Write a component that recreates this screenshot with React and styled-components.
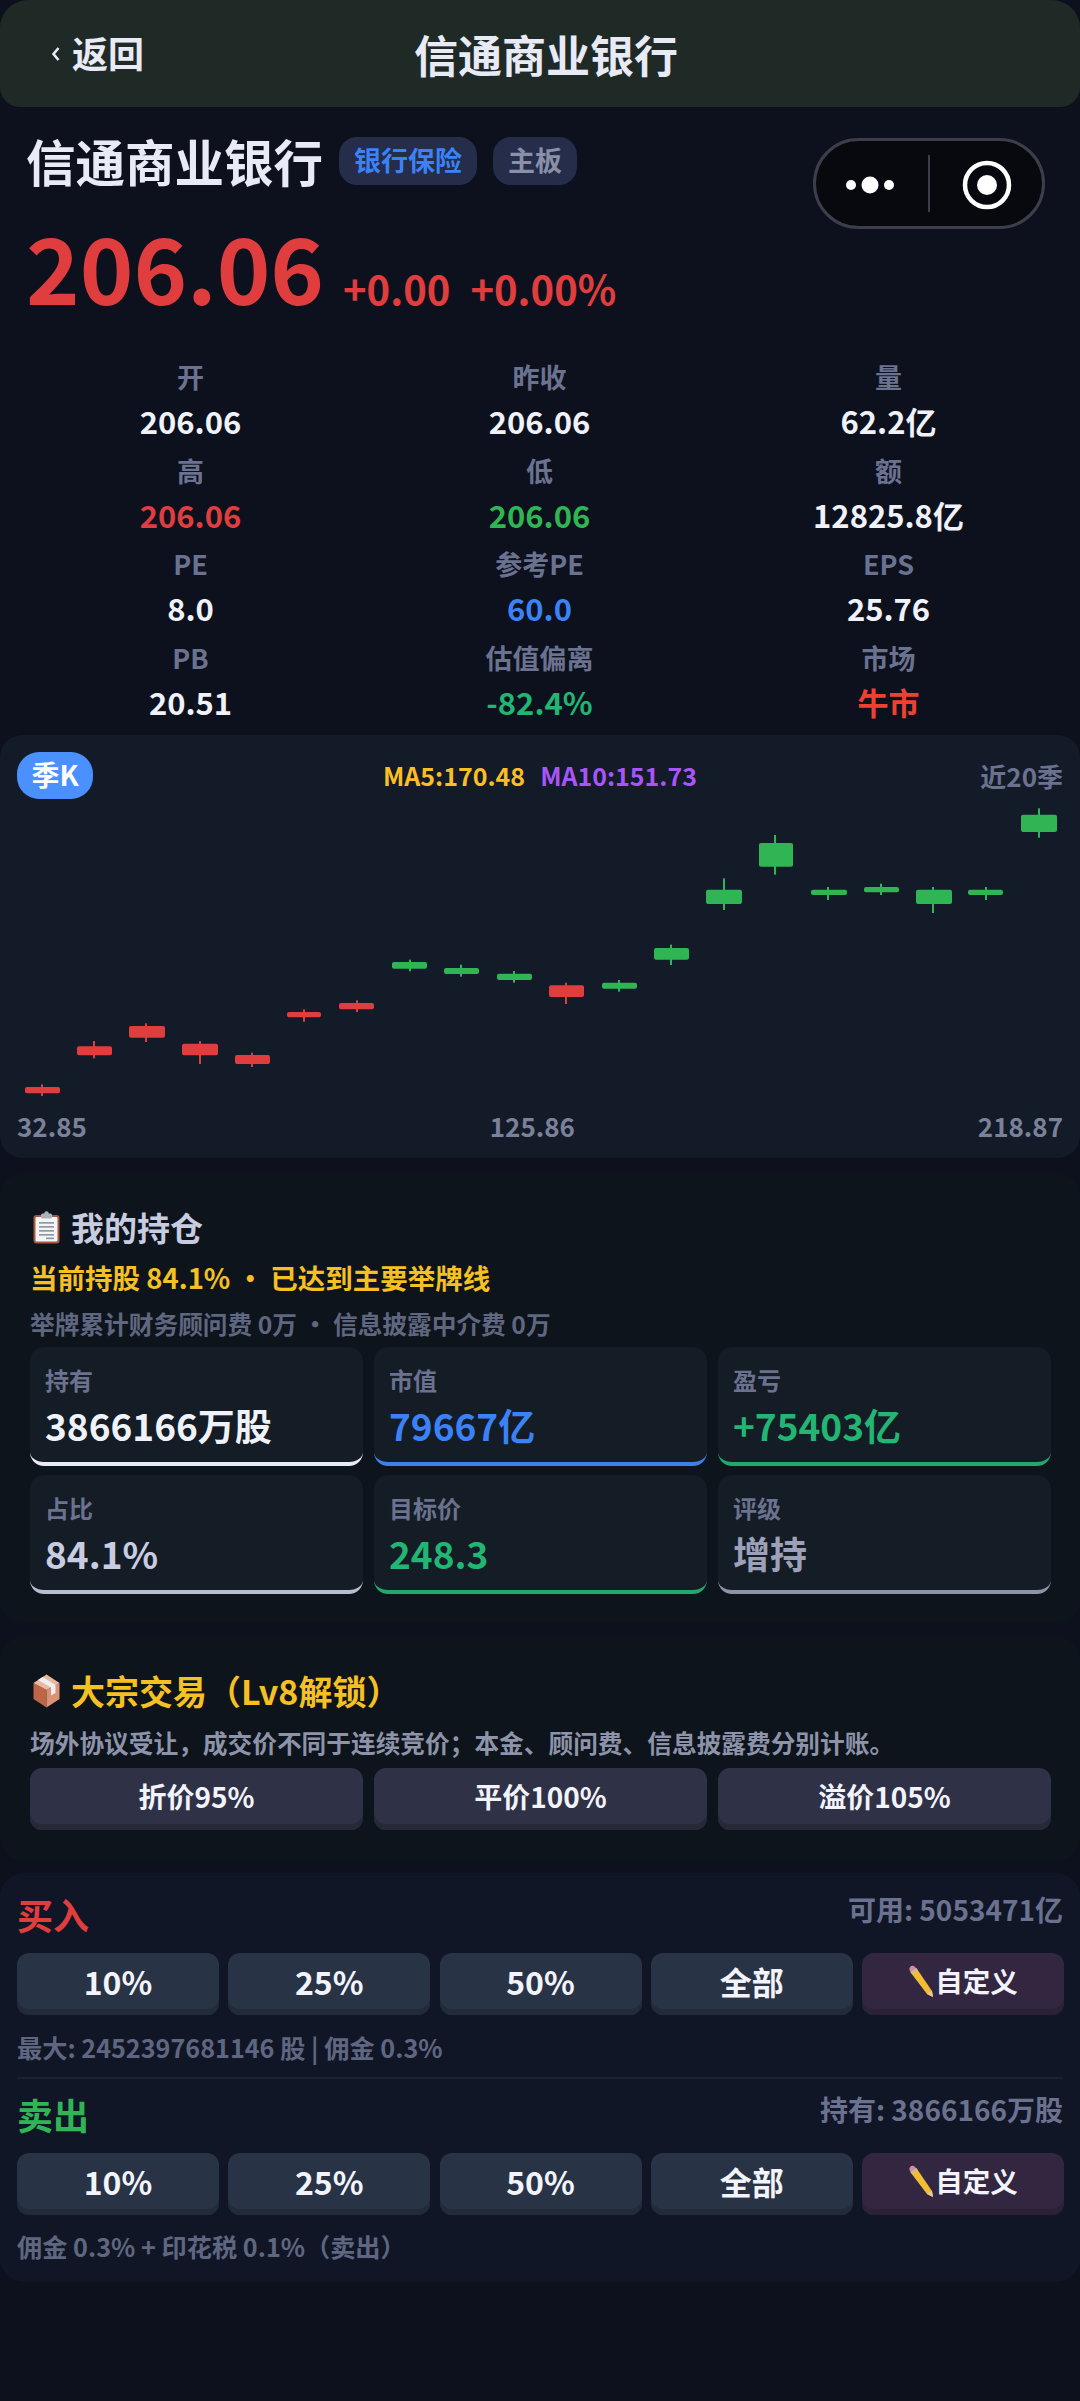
import React from 'react';
import styled, { createGlobalStyle } from 'styled-components';

const Global = createGlobalStyle`
  html, body { margin: 0; padding: 0; background: #0c111d; }
  body { font-family: "Noto Sans CJK SC", "Noto Sans", sans-serif; font-weight: 700; }
  * { box-sizing: border-box; }
`;

const Page = styled.div`
  width: 1080px;
  height: 2401px;
  overflow: hidden;
  background: #0c111d;
  display: flex;
  flex-direction: column;
`;

const NavBar = styled.header`
  height: 107px;
  background: #1f2a26;
  border-radius: 28px 28px 20px 20px;
  display: grid;
  grid-template-columns: 1fr auto 1fr;
  align-items: center;
  padding: 0 40px 0 52px;
`;
const BackLink = styled.div`
  display: flex;
  align-items: center;
  gap: 12px;
  color: #e8eaf6;
  font-size: 36px;
  line-height: 1;
  margin-top: -4px;
`;
const NavTitle = styled.div`
  color: #e8eaf6;
  font-size: 44px;
  line-height: 1;
`;

const Quote = styled.section`
  position: relative;
  padding: 26px 26px 0;
  height: 628px;
`;
const NameRow = styled.div`
  display: flex;
  align-items: center;
  gap: 16px;
  height: 56px;
`;
const StockName = styled.div`
  color: #e8eaf6;
  font-size: 49.5px;
  line-height: 1;
`;
const Tag = styled.span`
  height: 48px;
  padding: 0 15px;
  border-radius: 18px;
  background: #252d4a;
  color: ${p => p.$color};
  font-size: 27px;
  line-height: 46px;
`;
const Capsule = styled.div`
  position: absolute;
  left: 813px;
  top: 31px;
  width: 232px;
  height: 91px;
  border-radius: 46px;
  border: 3px solid #3c3f4b;
  background: #08090f;
`;
const PriceRow = styled.div`
  display: flex;
  align-items: baseline;
  margin-top: 17px;
  color: #e03e3e;
`;
const Price = styled.div`
  font-size: 91px;
  line-height: 118px;
  width: 317px;
`;
const Delta = styled.div`
  font-size: 40px;
  margin-right: 20px;
  line-height: 1;
  font-weight: 700;
`;
const QuoteGrid = styled.div`
  display: grid;
  grid-template-columns: repeat(3, 349px);
  margin: 31px 0 0 -10px;
  grid-auto-rows: 93.5px;
`;
const QuoteCell = styled.div`
  text-align: center;
`;
const QuoteLabel = styled.div`
  color: #6b7290;
  font-size: 27px;
  line-height: 44px;
`;
const QuoteValue = styled.div`
  color: ${p => p.$color || '#f0f2fa'};
  font-size: 31px;
  line-height: 44px;
`;

const ChartCard = styled.section`
  height: 423px;
  background: #131a28;
  border-radius: 22px;
  padding: 17px 17px 0;
`;
const ChartHead = styled.div`
  display: grid;
  grid-template-columns: 1fr auto 1fr;
  align-items: center;
  height: 47px;
`;
const PeriodPill = styled.div`
  width: 76px;
  height: 47px;
  border-radius: 22px;
  background: #4a90ff;
  color: #fff;
  font-size: 28px;
  line-height: 45px;
  text-align: center;
`;
const MALine = styled.div`
  display: flex;
  gap: 15px;
  font-size: 25px;
  line-height: 47px;
`;
const MA = styled.span`
  color: ${p => p.$color};
`;
const ChartNote = styled.div`
  color: #6b7290;
  font-size: 26px;
  text-align: right;
`;
const ChartSvg = styled.svg`
  display: block;
  width: 1080px;
  height: 304px;
  margin-left: -17px;
`;
const AxisRow = styled.div`
  display: flex;
  justify-content: space-between;
  color: #7b8199;
  font-size: 26px;
  line-height: 40px;
  margin-top: 3px;
`;

const Panel = styled.section`
  margin-top: ${p => p.$mt}px;
  height: ${p => p.$h}px;
  background: ${p => p.$bg};
  border-radius: 24px;
  padding: ${p => p.$pad};
`;
const SectionTitle = styled.div`
  display: flex;
  align-items: center;
  gap: 11px;
  color: ${p => p.$color};
  font-size: ${p => p.$size}px;
  line-height: 44px;
  height: 44px;
  padding-left: 3px;
`;
const Notice = styled.div`
  color: #f5c023;
  font-size: 27.5px;
  line-height: 40px;
  margin-top: 8px;
`;
const Fine = styled.div`
  color: ${p => p.$color};
  font-size: ${p => p.$size}px;
  line-height: 36px;
  margin-top: ${p => p.$mt}px;
`;
const ThreeGrid = styled.div`
  display: grid;
  grid-template-columns: repeat(3, 333px);
  column-gap: 11px;
  row-gap: 9px;
  margin-top: ${p => p.$mt}px;
`;
const StatCard = styled.div`
  height: 119px;
  padding: 15px 15px 0;
  border-radius: 14px;
  background: #141c25;
  border-bottom: 4px solid ${p => p.$accent};
`;
const StatLabel = styled.div`
  color: #6b7290;
  font-size: 24px;
  line-height: 36px;
`;
const StatValue = styled.div`
  color: ${p => p.$color};
  font-size: 37px;
  line-height: 48px;
  margin-top: 3px;
`;
const Btn = styled.div`
  height: 62px;
  border-radius: 12px;
  background: ${p => p.$bg};
  box-shadow: inset 0 -6px 0 ${p => p.$edge};
  color: #f3f4fb;
  font-size: ${p => p.$size}px;
  display: flex;
  align-items: center;
  justify-content: center;
  padding-bottom: 6px;
  line-height: 1;
`;
const SideHead = styled.div`
  display: flex;
  justify-content: space-between;
  align-items: flex-start;
  height: 56px;
`;
const SideTitle = styled.div`
  color: ${p => p.$color};
  font-size: 36px;
  line-height: 56px;
`;
const SideInfo = styled.div`
  color: #6b7290;
  font-size: 28px;
  line-height: 46px;
`;
const FiveGrid = styled.div`
  display: grid;
  grid-template-columns: repeat(5, 202px);
  column-gap: 9.25px;
  margin-top: 11px;
`;
const Divider = styled.div`
  height: 2px;
  background: #1c2235;
  margin: 12px 0 7px;
`;

const Dots = () => (
  <svg width="232" height="91" viewBox="0 0 232 91" style={{ display: 'block', margin: '-3px' }}>
    <circle cx="38" cy="47" r="5" fill="#fff" />
    <circle cx="57" cy="47" r="8.5" fill="#fff" />
    <circle cx="76" cy="47" r="5" fill="#fff" />
    <rect x="115" y="17" width="2" height="57" fill="#3c3f4b" />
    <circle cx="174" cy="47" r="22" fill="none" stroke="#fff" strokeWidth="4.5" />
    <circle cx="174" cy="47" r="10" fill="#fff" />
  </svg>
);

const Chevron = () => (
  <svg width="8" height="16" viewBox="0 0 8 16" style={{ marginTop: 4 }}>
    <path d="M6.5 2 L1.5 8 L6.5 14" fill="none" stroke="#e8eaf6" strokeWidth="2.6" />
  </svg>
);

const Clipboard = () => (
  <svg width="27" height="33" viewBox="0 0 27 33">
    <rect x="0.5" y="4" width="26" height="28.5" rx="3" fill="#a8583f" />
    <rect x="2.5" y="6" width="22" height="24.5" rx="1" fill="#f4f5f6" />
    <rect x="8" y="2.5" width="11" height="5" rx="1.5" fill="#aab3bb" />
    <circle cx="13.5" cy="2.5" r="2.2" fill="#aab3bb" />
    <g fill="#8f99a3">
      <rect x="6" y="11" width="15" height="1.7" />
      <rect x="6" y="15" width="15" height="1.7" />
      <rect x="6" y="19" width="15" height="1.7" />
      <rect x="6" y="23" width="15" height="1.7" />
      <rect x="13" y="26.5" width="8" height="1.7" />
    </g>
  </svg>
);

const Parcel = () => (
  <svg width="27" height="34" viewBox="0 0 27 34">
    <path d="M0.5 9 L13.5 16 L13.5 33.5 L0.5 25 Z" fill="#bd6547" />
    <path d="M13.5 16 L26.5 9 L26.5 25 L13.5 33.5 Z" fill="#dc9274" />
    <path d="M0.5 9 L13.5 0.5 L26.5 9 L13.5 16 Z" fill="#ecb9a0" />
    <path d="M5 6 L9.5 3 L22.5 11 L22.5 19 L18 21.5 L18 13.5 Z" fill="#eeeeee" />
  </svg>
);

const Pencil = () => (
  <svg width="26" height="33" viewBox="0 0 26 33" style={{ marginRight: 1 }}>
    <path d="M3 8 L9 4 L24 26 L25 32 L19 29 Z" fill="#f2bd35" />
    <path d="M1.5 5 C1 3 2 1.5 3.5 1 C5 0.5 6 1 7 2 L9 4 L3 8 Z" fill="#d98a94" />
    <path d="M2.5 7 L8.5 3 L9.5 4.5 L3.5 8.5 Z" fill="#b6bcc2" />
    <path d="M19 29 L24 26 L25 32 Z" fill="#e8c9a0" />
  </svg>
);

const RED = '#e03e3e';
const GREEN = '#2fb553';

// [color, centreX, bodyLeft, bodyRight, bodyTop, bodyBottom, wickTop, wickBottom]
// x in page pixels; y in thirds of a pixel as measured, offset by the drawing's top
const candles = [
  [RED, 42, 25, 60, 1071, 1090, 1063, 1098],
  [RED, 94, 77, 112, 949, 976, 933, 985],
  [RED, 146, 129, 165, 888, 923, 880, 936],
  [RED, 200, 182, 218, 941, 976, 933, 1002],
  [RED, 252, 235, 270, 975, 1002, 968, 1011],
  [RED, 304, 287, 321, 846, 862, 838, 875],
  [RED, 357, 339, 374, 819, 838, 811, 846],
  [GREEN, 410, 392, 427, 696, 716, 689, 724],
  [GREEN, 461, 444, 479, 714, 732, 704, 740],
  [GREEN, 514, 497, 532, 731, 750, 723, 758],
  [RED, 566, 549, 584, 766, 801, 758, 822],
  [GREEN, 619, 602, 637, 758, 776, 750, 785],
  [GREEN, 671, 654, 689, 654, 689, 644, 705],
  [GREEN, 724, 706, 742, 479, 522, 445, 540],
  [GREEN, 775, 759, 793, 339, 410, 315, 434],
  [GREEN, 828, 811, 847, 479, 495, 471, 510],
  [GREEN, 881, 864, 899, 471, 487, 461, 495],
  [GREEN, 933, 916, 952, 479, 522, 471, 549],
  [GREEN, 986, 968, 1003, 479, 495, 471, 510],
  [GREEN, 1039, 1021, 1057, 254, 306, 235, 323],
];

const Candles = () => (
  <ChartSvg viewBox="0 0 1080 304">
    {candles.map(([c, cx, l, r, bt, bb, wt, wb], i) => {
      const y = v => v / 3 - 69;
      return (
        <g key={i} fill={c}>
          <rect x={cx - 1} y={y(wt)} width="2" height={(wb - wt) / 3} />
          <rect x={l} y={y(bt)} width={r - l} height={(bb - bt) / 3} rx="2" />
        </g>
      );
    })}
  </ChartSvg>
);

const quote = [
  ['开', '206.06'], ['昨收', '206.06'], ['量', '62.2亿'],
  ['高', '206.06', RED], ['低', '206.06', GREEN], ['额', '12825.8亿'],
  ['PE', '8.0'], ['参考PE', '60.0', '#3b82f6'], ['EPS', '25.76'],
  ['PB', '20.51'], ['估值偏离', '-82.4%', '#22b573'], ['市场', '牛市', '#f04030'],
];
const stats = [
  ['持有', '3866166万股', '#f0f2fa', '#e8eaf5'],
  ['市值', '79667亿', '#3b82f6', '#3f7fe8'],
  ['盈亏', '+75403亿', '#22b573', '#22a86c'],
  ['占比', '84.1%', '#c8cce0', '#b9bdd0'],
  ['目标价', '248.3', '#22b573', '#22a86c'],
  ['评级', '增持', '#9ca0b8', '#8f93a8'],
];
const amounts = ['10%', '25%', '50%', '全部'];

const TradeButtons = () => (
  <FiveGrid>
    {amounts.map(a => (
      <Btn key={a} $bg="#283346" $edge="#212b3a" $size={32}>{a}</Btn>
    ))}
    <Btn $bg="#322640" $edge="#2b2238" $size={27.5}><Pencil />自定义</Btn>
  </FiveGrid>
);

export default function App() {
  return (
    <Page>
      <Global />
      <NavBar>
        <BackLink><Chevron />返回</BackLink>
        <NavTitle>信通商业银行</NavTitle>
      </NavBar>
      <Quote>
        <NameRow>
          <StockName>信通商业银行</StockName>
          <Tag $color="#3b82f6">银行保险</Tag>
          <Tag $color="#8a90a8">主板</Tag>
        </NameRow>
        <Capsule><Dots /></Capsule>
        <PriceRow>
          <Price>206.06</Price>
          <Delta>+0.00</Delta>
          <Delta>+0.00%</Delta>
        </PriceRow>
        <QuoteGrid>
          {quote.map(([l, v, c]) => (
            <QuoteCell key={l}>
              <QuoteLabel>{l}</QuoteLabel>
              <QuoteValue $color={c}>{v}</QuoteValue>
            </QuoteCell>
          ))}
        </QuoteGrid>
      </Quote>
      <ChartCard>
        <ChartHead>
          <PeriodPill>季K</PeriodPill>
          <MALine>
            <MA $color="#fbbf24">MA5:170.48</MA>
            <MA $color="#a855f7">MA10:151.73</MA>
          </MALine>
          <ChartNote>近20季</ChartNote>
        </ChartHead>
        <Candles />
        <AxisRow>
          <span>32.85</span><span>125.86</span><span>218.87</span>
        </AxisRow>
      </ChartCard>
      <Panel $mt={15} $h={450} $bg="#0e141c" $pad="32px 30px 0">
        <SectionTitle $color="#c8cce0" $size={33}><Clipboard />我的持仓</SectionTitle>
        <Notice>当前持股 84.1% · 已达到主要举牌线</Notice>
        <Fine $color="#5f6780" $size={24.7} $mt={8}>举牌累计财务顾问费 0万 · 信息披露中介费 0万</Fine>
        <ThreeGrid $mt={6}>
          {stats.map(([l, v, c, a]) => (
            <StatCard key={l} $accent={a}>
              <StatLabel>{l}</StatLabel>
              <StatValue $color={c}>{v}</StatValue>
            </StatCard>
          ))}
        </ThreeGrid>
      </Panel>
      <Panel $mt={13} $h={225} $bg="#0e141c" $pad="33px 30px 0">
        <SectionTitle $color="#f5c023" $size={34}><Parcel />大宗交易（Lv8解锁）</SectionTitle>
        <Fine $color="#8d93a9" $size={24.7} $mt={11}>场外协议受让，成交价不同于连续竞价；本金、顾问费、信息披露费分别计账。</Fine>
        <ThreeGrid $mt={8}>
          {['折价95%', '平价100%', '溢价105%'].map(t => (
            <Btn key={t} $bg="#2f3247" $edge="#262938" $size={28}>{t}</Btn>
          ))}
        </ThreeGrid>
      </Panel>
      <Panel $mt={12} $h={409} $bg="#111627" $pad="13px 17px 0">
        <SideHead>
          <SideTitle $color={RED}>买入</SideTitle>
          <SideInfo>可用: 5053471亿</SideInfo>
        </SideHead>
        <TradeButtons />
        <Fine $color="#5f6780" $size={25.2} $mt={14}>最大: 2452397681146 股 | 佣金 0.3%</Fine>
        <Divider />
        <SideHead>
          <SideTitle $color={GREEN}>卖出</SideTitle>
          <SideInfo>持有: 3866166万股</SideInfo>
        </SideHead>
        <TradeButtons />
        <Fine $color="#5f6780" $size={25.2} $mt={13}>佣金 0.3% + 印花税 0.1%（卖出）</Fine>
      </Panel>
    </Page>
  );
}
